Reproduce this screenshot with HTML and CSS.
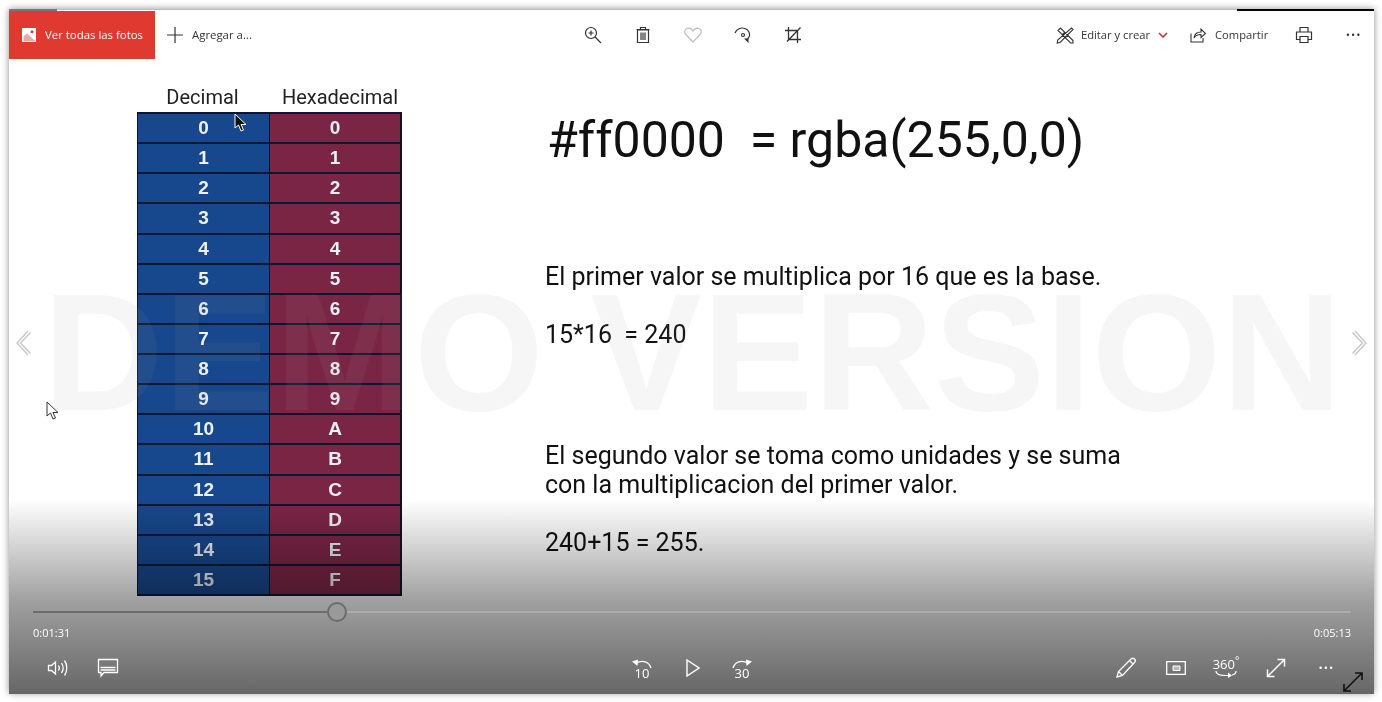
FILE: index.html
```html
<!DOCTYPE html>
<html lang="es">
<head>
    <meta charset="UTF-8">
    <title>Fotos</title>
    <link rel="stylesheet" href="styles.css">
</head>
<body>
    <div class="window">
        <div class="top-tab"></div>
        <div class="top-line"></div>
        <div class="toolbar">
            <div class="tool-group">
                <div class="all-photos">
                    <svg width="16" height="16" viewBox="0 0 16 16"><path fill="#fff" d="M1 1h14v14H1z"/><path fill="#e0392f" d="M2.500 9.500 6 6.500l6 5.500 2 1.500v.5H2.500z" opacity=".45"/><circle cx="11" cy="4.800" r="1.500" fill="#e0392f"/></svg>
                    <span>Ver todas las fotos</span>
                </div>
                <div class="add-to">
                    <svg width="18" height="18" viewBox="0 0 18 18"><path stroke="#333" stroke-width="1.200" fill="none" d="M9 1v16M1 9h16"/></svg>
                    <span>Agregar a...</span>
                </div>
            </div>
            <div class="tool-group center-tools">
                <div class="tool-btn"><svg width="20" height="20" viewBox="0 0 20 20" fill="none" stroke="#333" stroke-width="1.200"><circle cx="8" cy="8" r="5.500"/><path d="M12 12l6 6M5.500 8h5M8 5.500v5"/></svg></div>
                <div class="tool-btn"><svg width="20" height="20" viewBox="0 0 20 20" fill="none" stroke="#333" stroke-width="1.200"><path d="M4.500 5h11v12.500h-11zM3.500 4.500h13M7.500 4V2.500h5V4M8 7.500v7.500M10 7.500v7.500M12 7.500v7.500"/></svg></div>
                <div class="tool-btn"><svg width="20" height="20" viewBox="0 0 20 20" fill="none" stroke="#bbb" stroke-width="1.200"><path d="M10 17 2.800 9.500C1 7.500 1.500 4.800 3.500 3.800 5.800 2.700 8.500 3.500 10 6c1.500-2.500 4.200-3.300 6.500-2.200 2 1 2.500 3.700.700 5.700z"/></svg></div>
                <div class="tool-btn"><svg width="20" height="20" viewBox="0 0 20 20" fill="none" stroke="#333" stroke-width="1.200"><path d="M2 8C3.500 4 8 2 12 3.500c4 1.500 5.500 5.500 4 8.500-.6 1.200-1.500 2.200-2.500 3"/><circle cx="10" cy="10" r="1.500"/><path fill="#333" stroke="none" d="M11 13.500h4.500V18z"/></svg></div>
                <div class="tool-btn"><svg width="18" height="18" viewBox="0 0 18 18" fill="none" stroke="#333" stroke-width="1.300"><path d="M1 4.500h12.500V17M4.500 1v12.500H17M3 15.500 16.500 1.500"/></svg></div>
            </div>
            <div class="tool-group right-tools">
                <svg width="18" height="18" viewBox="0 0 18 18" fill="none" stroke="#333" stroke-width="1.100"><path d="M2 4.500 4.500 2 17 14.500 17 17 14.500 17zM15.500 2 17 3.500 4 16.500 1.200 17 1.700 14zM6 9 9 6M9 12l3-3"/></svg>
                <span class="label edit-label">Editar y crear</span>
                <svg class="chevron" width="10" height="6" viewBox="0 0 10 6" fill="none" stroke="#c8313c" stroke-width="1.600"><path d="M1 1l4 4 4-4"/></svg>
                <svg class="share-icon" width="16" height="16" viewBox="0 0 16 16" fill="none" stroke="#333" stroke-width="1.100"><path d="M1 6.500V15h12v-4M4 11c.5-4 3-6 7-6V2l4.500 4.500L11 10.500V7.500c-3 0-5.500 1-7 3.500z"/></svg>
                <span class="label share-label">Compartir</span>
                <svg class="print-icon" width="18" height="18" viewBox="0 0 18 18" fill="none" stroke="#333" stroke-width="1.200"><path d="M5 6V1.500h8V6M5 13.500H1.500V6h15v7.500H13M5 10.500h8v6H5z"/></svg>
                <span class="dots dark-dots">···</span>
            </div>
        </div>

        <div class="stage">
            <div class="hex-table">
                <div class="hex-head">Decimal</div>
                <div class="hex-head hex-head-right">Hexadecimal</div>
                <div class="dec">0</div><div class="hex">0</div>
                <div class="dec">1</div><div class="hex">1</div>
                <div class="dec">2</div><div class="hex">2</div>
                <div class="dec">3</div><div class="hex">3</div>
                <div class="dec">4</div><div class="hex">4</div>
                <div class="dec">5</div><div class="hex">5</div>
                <div class="dec">6</div><div class="hex">6</div>
                <div class="dec">7</div><div class="hex">7</div>
                <div class="dec">8</div><div class="hex">8</div>
                <div class="dec">9</div><div class="hex">9</div>
                <div class="dec">10</div><div class="hex">A</div>
                <div class="dec">11</div><div class="hex">B</div>
                <div class="dec">12</div><div class="hex">C</div>
                <div class="dec">13</div><div class="hex">D</div>
                <div class="dec">14</div><div class="hex">E</div>
                <div class="dec">15</div><div class="hex">F</div>
            </div>
            <div class="slide-text">
                <h1>#ff0000 &nbsp;= rgba(255,0,0)</h1>
                <p class="first">El primer valor se multiplica por 16 que es la base.</p>
                <p class="near">15*16 &nbsp;= 240</p>
                <p class="far">El segundo valor se toma como unidades y se suma<br>con la multiplicacion del primer valor.</p>
                <p class="near">240+15 = 255.</p>
            </div>

            <div class="watermark">DEMO VERSION</div>
            <div class="fade"></div>

            <svg class="nav nav-prev" width="18" height="28" viewBox="0 0 18 28" fill="none" stroke="#c9c9c9" stroke-width="1.500"><path d="M14 2 3 14l11 12M16.500 3.500 6.500 14l10 10.500"/></svg>
            <svg class="nav nav-next" width="18" height="28" viewBox="0 0 18 28" fill="none" stroke="#c9c9c9" stroke-width="1.500"><path d="M4 2l11 12L4 26M1.500 3.500l10 10.500-10 10.500"/></svg>

            <svg class="cursor cursor-table" width="14" height="20" viewBox="0 0 14 20"><path fill="#111" stroke="#fff" d="M1 1v14l3.500-3 2.500 6 2.500-1-2.500-5.500H12z"/></svg>
            <svg class="cursor cursor-left" width="14" height="20" viewBox="0 0 14 20"><path fill="#fff" stroke="#333" d="M1 1v14l3.500-3 2.500 6 2.500-1-2.500-5.500H12z"/></svg>

            <div class="player">
                <div class="seek">
                    <div class="seek-done"></div>
                    <div class="seek-thumb"></div>
                    <div class="seek-rest"></div>
                </div>
                <div class="times"><span>0:01:31</span><span>0:05:13</span></div>
                <div class="controls">
                    <div class="tool-group">
                        <div class="tool-btn"><svg width="22" height="20" viewBox="0 0 22 20" fill="none" stroke="#fff" stroke-width="1.300"><path d="M1.500 7.500v5h3l4 3.500V4l-4 3.500zM11.500 7.500c1 1.500 1 3.500 0 5M14.500 5c2 3 2 7 0 10M17.500 2.500c3 4 3 11 0 15"/></svg></div>
                        <div class="tool-btn"><svg width="22" height="20" viewBox="0 0 22 20" fill="none" stroke="#fff" stroke-width="1.300"><path d="M1.500 1.500h19v13H7L4 18v-3.500H1.500zM3.500 9.500h15M3.500 12h15"/></svg></div>
                    </div>
                    <div class="tool-group">
                        <div class="tool-btn skip">
                            <svg width="22" height="12" viewBox="0 0 22 12" fill="none" stroke="#fff" stroke-width="1.300"><path d="M20 10C18 4 12 1.500 5 5"/><path fill="#fff" stroke="none" d="M1 3.500 7 1.500 6.500 8z"/></svg>
                            <span>10</span>
                        </div>
                        <div class="tool-btn"><svg width="16" height="20" viewBox="0 0 16 20" fill="none" stroke="#fff" stroke-width="1.400"><path d="M3 2v16l12-8z"/></svg></div>
                        <div class="tool-btn skip">
                            <svg width="22" height="12" viewBox="0 0 22 12" fill="none" stroke="#fff" stroke-width="1.300"><path d="M2 10C4 4 10 1.500 17 5"/><path fill="#fff" stroke="none" d="M21 3.500 15 1.500 15.500 8z"/></svg>
                            <span>30</span>
                        </div>
                    </div>
                    <div class="tool-group end-tools">
                        <div class="tool-btn"><svg width="22" height="22" viewBox="0 0 22 22" fill="none" stroke="#fff" stroke-width="1.300"><path d="M2 20l1.500-5.500L16 2c1-1 2.500-1 3.500 0s1 2.500 0 3.500L7.500 18.500zM3.500 14.500l4 4M14.500 3.500l4 4"/></svg></div>
                        <div class="tool-btn"><svg width="20" height="14" viewBox="0 0 20 14" fill="none" stroke="#fff" stroke-width="1.300"><path d="M.700.700h18.600v12.600H.700z"/><path d="M7 5h7v4.500H7z" fill="#fff" fill-opacity=".5" stroke-width="1"/></svg></div>
                        <div class="tool-btn view360">
                            <span>360<sup>°</sup></span>
                            <svg width="22" height="8" viewBox="0 0 22 8" fill="none" stroke="#fff" stroke-width="1.200"><path d="M1 1c0 3 4 4.500 10 4.500h3M21 1c0 2-1.500 3.500-4 4"/><path fill="#fff" stroke="none" d="M13 2.500 17 5.500 13 8z"/></svg>
                        </div>
                        <div class="tool-btn"><svg width="20" height="20" viewBox="0 0 20 20" fill="none" stroke="#fff" stroke-width="1.500"><path d="M1.500 18.500l17-17M1.500 11.500v7h7M11.500 1.500h7v7"/></svg></div>
                        <div class="tool-btn"><span class="dots">···</span></div>
                    </div>
                </div>
            </div>

            <svg class="cursor cursor-resize" width="22" height="22" viewBox="0 0 22 22" fill="none" stroke="#111" stroke-width="1.600"><path d="M2 20 20 2M2 13v7h7M13 2h7v7"/></svg>
        </div>
    </div>
</body>
</html>
```

FILE: styles.css
```css
* {
    box-sizing: border-box;
}
html, body {
    height: 100%;
}
body {
    margin: 0;
    overflow: hidden;
    background-color: #fff;
    font-family: "Open Sans", sans-serif;
}
.window {
    position: relative;
    display: flex;
    flex-direction: column;
    width: 1365px;
    height: 684px;
    margin: 10px 0 0 9px;
    background: #fff;
    box-shadow: 0 -1px 7px rgba(0, 0, 0, 0.45);
}
.top-line {
    position: absolute;
    top: -1px;
    right: 0;
    width: 137px;
    height: 2px;
    background: #000;
}
.top-tab {
    position: absolute;
    top: -1px;
    left: 0;
    width: 48px;
    height: 2px;
    background: #777;
}

/* toolbar */
.toolbar {
    display: grid;
    grid-template-columns: 1fr auto 1fr;
    align-items: center;
    flex: 0 0 49px;
    color: #333;
    font-size: 12px;
}
.tool-group {
    display: flex;
    align-items: center;
}
.all-photos {
    display: flex;
    align-items: center;
    gap: 8px;
    width: 146px;
    height: 48px;
    margin-top: 1px;
    padding: 0 0 1px 12px;
    background: #e0392f;
    color: #fff;
    font-size: 11.4px;
}
.add-to {
    display: flex;
    align-items: center;
    gap: 8px;
    padding-left: 11px;
    font-size: 11.4px;
}
.tool-btn {
    display: flex;
    align-items: center;
    justify-content: center;
    width: 50px;
    height: 48px;
}
.center-tools {
    margin-left: 2px;
}
.right-tools {
    justify-content: flex-end;
    padding-right: 13px;
}
.label {
    margin-left: 7px;
    font-size: 11.2px;
}
.share-label {
    margin-left: 9px;
}
.chevron {
    margin-left: 8px;
}
.share-icon {
    margin-left: 22px;
}
.print-icon {
    margin-left: 27px;
}
.dots {
    font-size: 20px;
    line-height: 20px;
    letter-spacing: 0;
}
.dark-dots {
    margin-left: 32px;
}

/* slide */
.stage {
    position: relative;
    display: flex;
    flex: 1;
    gap: 143px;
    padding: 25px 0 0 128px;
    overflow: hidden;
    font-family: Roboto, sans-serif;
    color: #111;
}
.hex-table {
    display: grid;
    grid-template-columns: 133px 132px;
    grid-template-rows: 28px repeat(15, 30.125px) 32px;
    width: 265px;
    height: 512px;
    text-align: center;
    font-family: "Liberation Sans", sans-serif;
    font-size: 19px;
    font-weight: bold;
    color: #eef0f6;
}
.hex-head {
    font-family: Roboto, sans-serif;
    font-size: 20px;
    font-weight: normal;
    line-height: 26px;
    color: #222;
    padding-right: 2px;
}
.hex-head-right {
    padding: 0 0 0 8px;
    white-space: nowrap;
}
.dec, .hex {
    border-top: 2px solid #0b1730;
    line-height: 27px;
}
.dec {
    background: #17478c;
    border-left: 1px solid #0b1730;
    border-right: 1px solid #0b1730;
}
.hex {
    background: #7b2545;
    border-right: 2px solid #16101c;
}
.hex-table div:nth-child(n+33) {
    border-bottom: 2px solid #0b1730;
}
.slide-text {
    padding-top: 26px;
    width: 700px;
}
.slide-text h1 {
    margin: 0 0 0 2px;
    font-size: 50px;
    font-weight: normal;
    line-height: 60px;
    white-space: nowrap;
}
.slide-text p {
    margin: 0;
    font-size: 25px;
    line-height: 29px;
}
.slide-text .first {
    margin-top: 92px;
}
.slide-text .near {
    margin-top: 29px;
}
.slide-text .far {
    margin-top: 92px;
}

/* things over the slide */
.watermark {
    position: absolute;
    top: 198px;
    left: 34px;
    font-family: "Liberation Sans", sans-serif;
    font-size: 167px;
    font-weight: bold;
    line-height: 190px;
    white-space: nowrap;
    color: rgba(150, 150, 150, 0.09);
}
.fade {
    position: absolute;
    left: 0;
    right: 0;
    bottom: 0;
    height: 194px;
    background: linear-gradient(to bottom, #fff, #a0a0a0 52%, #666);
    mix-blend-mode: multiply;
}
.nav {
    position: absolute;
    top: 270px;
}
.nav-prev {
    left: 5px;
}
.nav-next {
    right: 5px;
}
.cursor {
    position: absolute;
}
.cursor-table {
    top: 54px;
    left: 225px;
}
.cursor-left {
    top: 342px;
    left: 37px;
}
.cursor-resize {
    right: 10px;
    bottom: 1px;
}

/* player */
.player {
    position: absolute;
    left: 0;
    right: 0;
    bottom: 0;
    height: 92px;
    padding: 0 23px 0 24px;
    color: #fff;
    font-family: "Open Sans", sans-serif;
}
.seek {
    display: flex;
    align-items: center;
    height: 20px;
}
.seek-done {
    width: 294px;
    height: 2px;
    background: #6c6c6c;
}
.seek-thumb {
    flex: none;
    width: 20px;
    height: 20px;
    border: 2px solid #6c6c6c;
    border-radius: 50%;
    background: #999;
}
.seek-rest {
    flex: 1;
    height: 2px;
    background: #adadad;
}
.times {
    display: flex;
    justify-content: space-between;
    height: 22px;
    font-size: 11px;
    line-height: 22px;
}
.controls {
    display: grid;
    grid-template-columns: 1fr auto 1fr;
    align-items: center;
    height: 48px;
}
.end-tools {
    justify-content: flex-end;
}
.skip {
    flex-direction: column;
    font-size: 13px;
    line-height: 12px;
}
.skip svg {
    margin-bottom: -3px;
}
.view360 {
    flex-direction: column;
    font-size: 13px;
    line-height: 12px;
}
.view360 sup {
    font-size: 10px;
    line-height: 0;
}
```
